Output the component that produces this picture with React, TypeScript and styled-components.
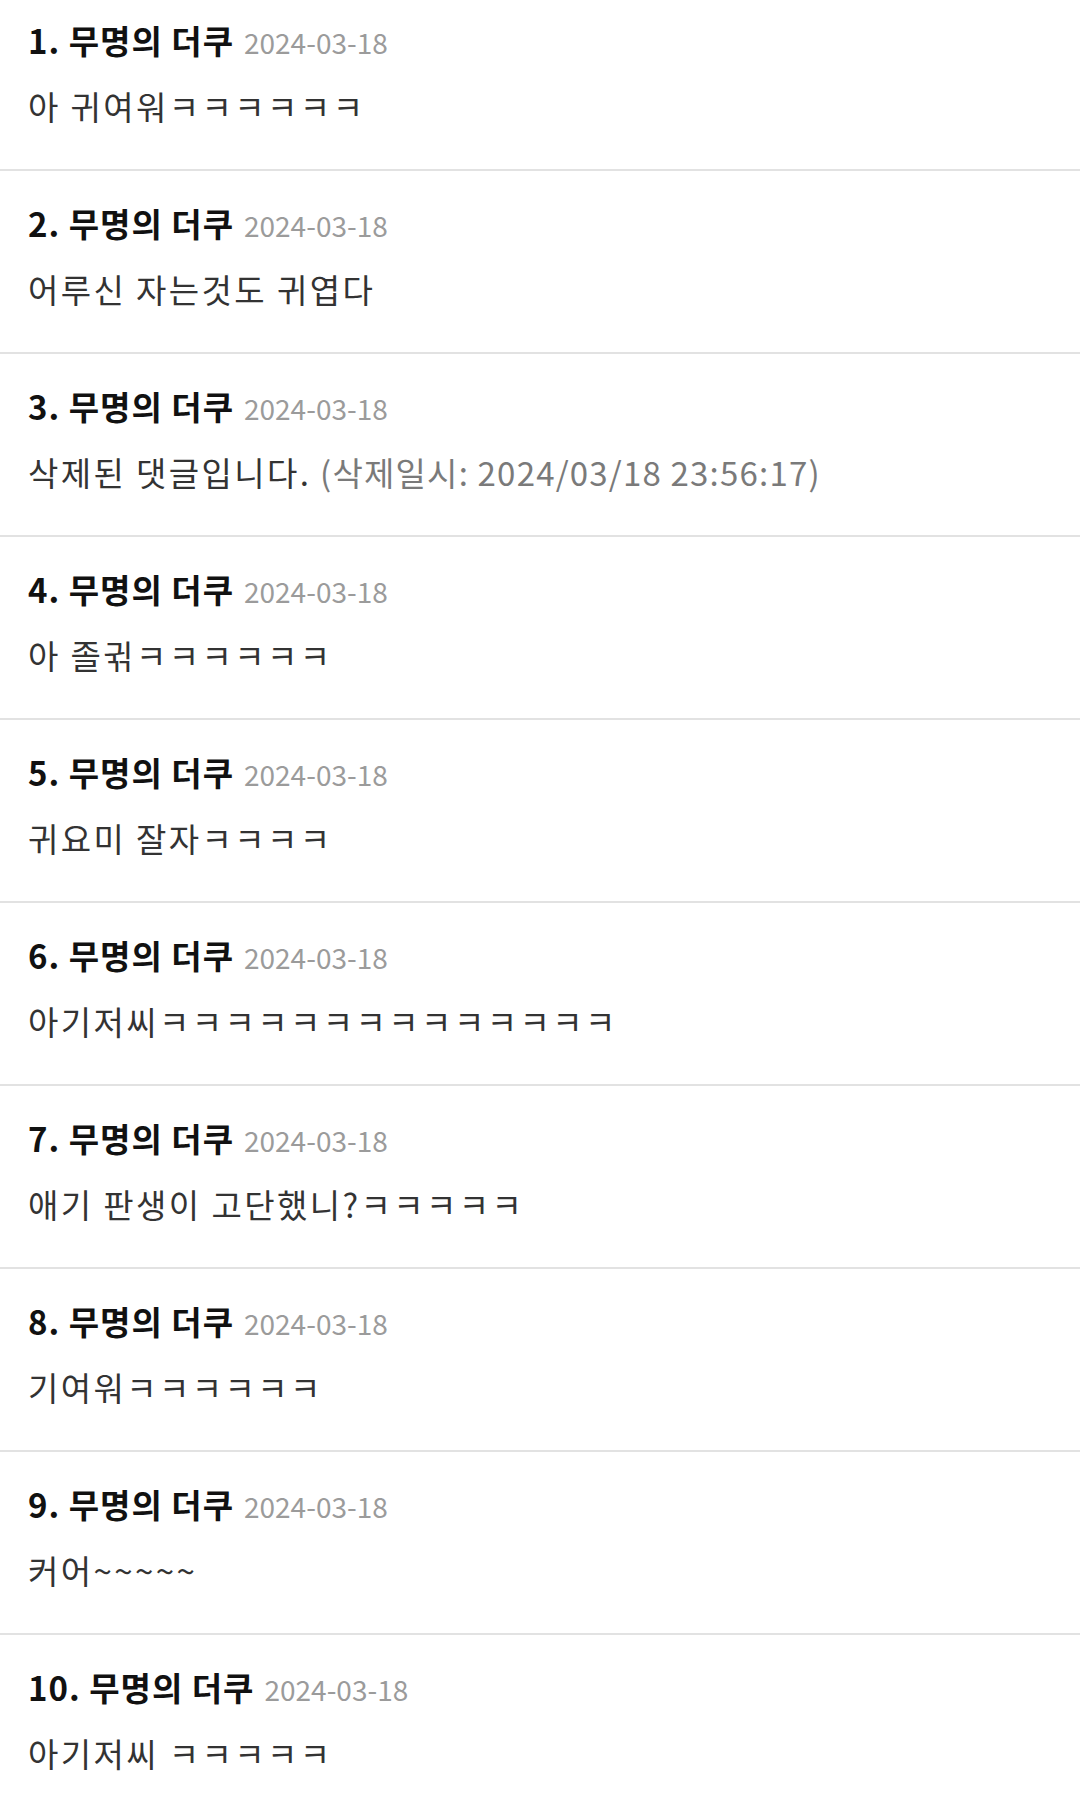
import styled, { createGlobalStyle } from "styled-components";

const GlobalStyle = createGlobalStyle`
  html, body {
    margin: 0;
    padding: 0;
    background: #fff;
  }
  body {
    font-family: "Noto Sans CJK KR", "Noto Sans", sans-serif;
    overflow: hidden;
  }
`;

type Comment = {
  id: number;
  name: string;
  date: string;
  text: string;
  deletedAt?: string;
};

const comments: Comment[] = [
  { id: 1, name: "무명의 더쿠", date: "2024-03-18", text: "아 귀여워ㅋㅋㅋㅋㅋㅋ" },
  { id: 2, name: "무명의 더쿠", date: "2024-03-18", text: "어루신 자는것도 귀엽다" },
  {
    id: 3,
    name: "무명의 더쿠",
    date: "2024-03-18",
    text: "삭제된 댓글입니다.",
    deletedAt: "(삭제일시: 2024/03/18 23:56:17)",
  },
  { id: 4, name: "무명의 더쿠", date: "2024-03-18", text: "아 졸귂ㅋㅋㅋㅋㅋㅋ" },
  { id: 5, name: "무명의 더쿠", date: "2024-03-18", text: "귀요미 잘자ㅋㅋㅋㅋ" },
  { id: 6, name: "무명의 더쿠", date: "2024-03-18", text: "아기저씨ㅋㅋㅋㅋㅋㅋㅋㅋㅋㅋㅋㅋㅋㅋ" },
  { id: 7, name: "무명의 더쿠", date: "2024-03-18", text: "애기 판생이 고단했니?ㅋㅋㅋㅋㅋ" },
  { id: 8, name: "무명의 더쿠", date: "2024-03-18", text: "기여워ㅋㅋㅋㅋㅋㅋ" },
  { id: 9, name: "무명의 더쿠", date: "2024-03-18", text: "커어~~~~~" },
  { id: 10, name: "무명의 더쿠", date: "2024-03-18", text: "아기저씨 ㅋㅋㅋㅋㅋ" },
];

const List = styled.ul`
  list-style: none;
  margin: -12px 0 0;
  padding: 0;
`;

const Row = styled.li`
  padding: 30px 28px 41px;
  border-bottom: 2px solid #e2e2e2;
`;

const Header = styled.div`
  display: flex;
  align-items: baseline;
  height: 44px;
  line-height: 44px;
`;

const Name = styled.span`
  font-size: 33px;
  font-weight: 700;
  letter-spacing: 1px;
  color: #111;
`;

const DateText = styled.span`
  margin-left: 10px;
  font-size: 28px;
  line-height: 36px;
  color: #9b9b9b;
`;

const Body = styled.p`
  margin: 22px 0 0;
  font-size: 33px;
  line-height: 44px;
  letter-spacing: 2.4px;
  color: #333;
  white-space: nowrap;
`;

const Deleted = styled.span`
  letter-spacing: 1.2px;
  color: #7a7a7a;
`;

export default function App() {
  return (
    <>
      <GlobalStyle />
      <List>
        {comments.map((c) => (
          <Row key={c.id}>
            <Header>
              <Name>
                {c.id}. {c.name}
              </Name>
              <DateText>{c.date}</DateText>
            </Header>
            <Body>
              {c.text}
              {c.deletedAt && <Deleted> {c.deletedAt}</Deleted>}
            </Body>
          </Row>
        ))}
      </List>
    </>
  );
}
